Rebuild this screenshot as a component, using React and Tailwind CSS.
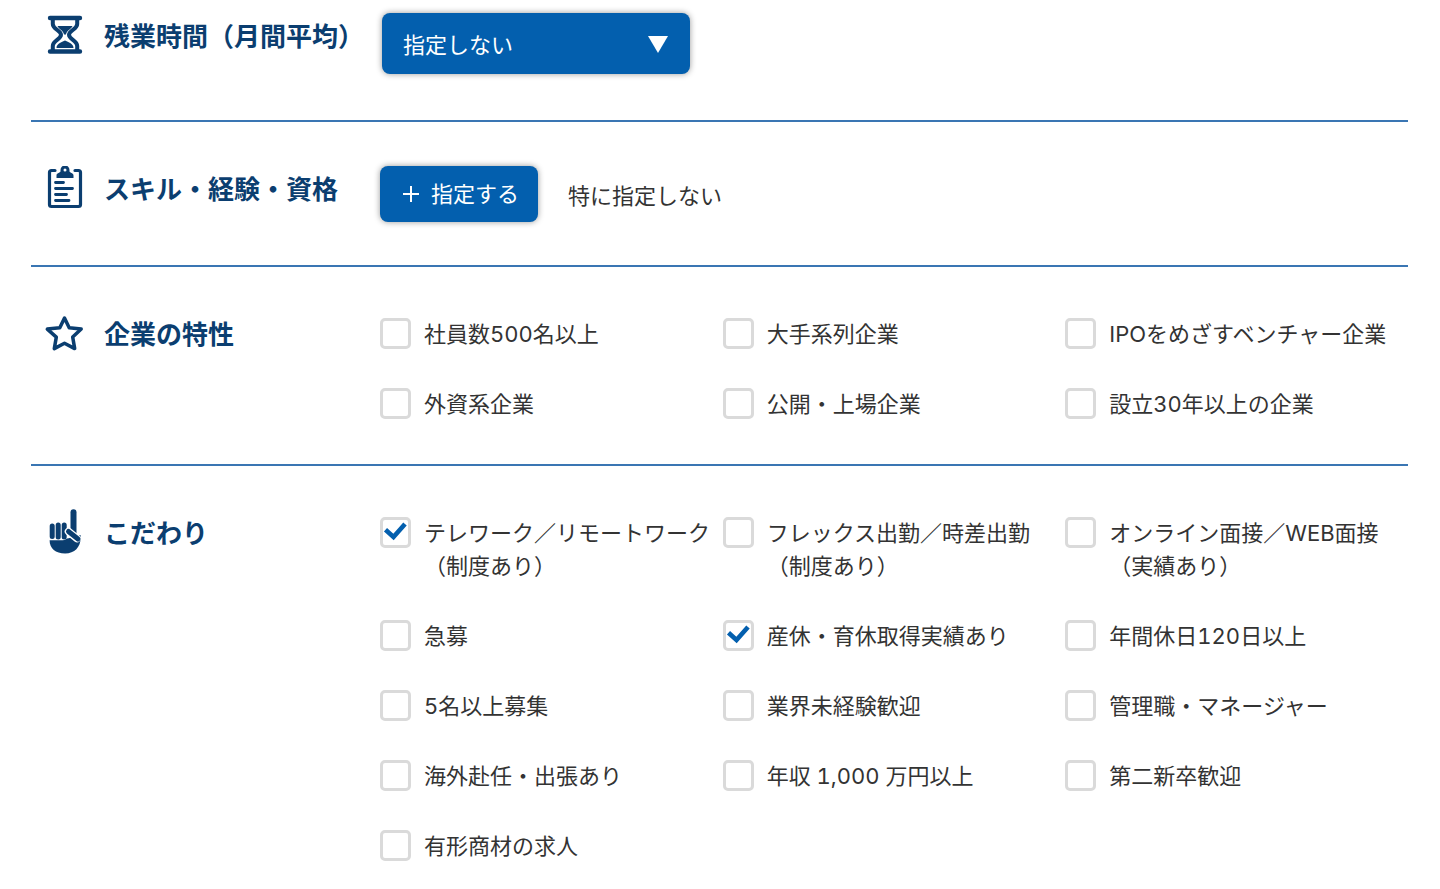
import React, { useState } from 'react';

const FEATURES = [
    '社員数500名以上',
    '大手系列企業',
    'IPOをめざすベンチャー企業',
    '外資系企業',
    '公開・上場企業',
    '設立30年以上の企業',
];

const PREFERENCES = [
    'テレワーク／リモートワーク\n（制度あり）',
    'フレックス出勤／時差出勤\n（制度あり）',
    'オンライン面接／WEB面接\n（実績あり）',
    '急募',
    '産休・育休取得実績あり',
    '年間休日120日以上',
    '5名以上募集',
    '業界未経験歓迎',
    '管理職・マネージャー',
    '海外赴任・出張あり',
    '年収 1,000 万円以上',
    '第二新卒歓迎',
    '有形商材の求人',
];

function HourglassIcon() {
    return (
        <svg className="w-9 h-11" viewBox="0 0 36 44" fill="none" stroke="currentColor">
            <path d="M3 5h30M3 38.500h30" strokeWidth="4.400" strokeLinecap="round" />
            <path d="M5.800 6v5c0 5.500 8.200 6 8.200 10.800S5.800 27.500 5.800 33v5M30.200 6v5c0 5.500-8.200 6-8.200 10.800s8.200 5.700 8.200 11.200v5" strokeWidth="4" />
            <path d="M10.500 13h15c-1.500 3.500-6 4.500-6.500 8.500h-2c-.5-4-5-5-6.500-8.500z" fill="currentColor" stroke="none" />
            <path d="M9.500 35c0-4 4-5.500 8.500-7.500 4.500 2 8.500 3.500 8.500 7.500z" fill="currentColor" stroke="none" />
        </svg>
    );
}

function ClipboardIcon() {
    return (
        <svg className="w-9 h-11" viewBox="0 0 36 44" fill="none" stroke="currentColor">
            <path d="M8 4.500H4.500a2 2 0 0 0-2 2V38.500a2 2 0 0 0 2 2h27a2 2 0 0 0 2-2V6.500a2 2 0 0 0-2-2H28" strokeWidth="3.200" strokeLinecap="round" />
            <path
                d="M9.500 12V9.500c0-2.500 2.500-2 4-4V4a4.500 4.500 0 0 1 9 0v1.500c1.500 2 4 1.500 4 4V12zM18 2.600a1.500 1.500 0 1 0 0 3 1.500 1.500 0 0 0 0-3z"
                fill="currentColor"
                fillRule="evenodd"
                stroke="none"
            />
            <path d="M8.500 16.500h8M8.500 22.500h17M8.500 28.500h11M8.500 34.500h13.500" strokeWidth="2.800" strokeLinecap="round" />
        </svg>
    );
}

function StarIcon() {
    return (
        <svg className="w-9 h-11 overflow-visible" viewBox="0 0 36 44" fill="none" stroke="currentColor">
            <path
                d="M17.500 7l4.700 9.700 12 1.400-8.500 8 2 11.500-10.200-5.400L7.300 37.600l2-11.500-9-8 12.500-1.400z"
                strokeWidth="3.500"
                strokeLinejoin="round"
            />
        </svg>
    );
}

function HandIcon() {
    return (
        <svg className="w-9 h-11 overflow-visible" viewBox="0 0 36 44" fill="none" stroke="currentColor" strokeLinecap="round">
            <path d="M5.200 16V26.500M11.200 15v12M17.200 15v12" strokeWidth="5" />
            <path d="M26.500 2.200V23" strokeWidth="6" />
            <path d="M2.600 30.300h13c3 0 3.500-2 6-2l12-3.300v3c0 9-6 15.500-15.500 15.500S2.600 38.500 2.600 30.300z" fill="currentColor" stroke="none" />
            <path d="M21.500 21.500l8.500 7" stroke="white" strokeWidth="7.600" />
            <path d="M21.500 21.500l9.500 7.500" strokeWidth="5" />
        </svg>
    );
}

function Section({ icon, title, className, children }) {
    return (
        <section className={className}>
            <div className="flex items-start">
                <div className="flex h-11 w-[349px] shrink-0 items-center gap-[21px] pl-4 text-[#0b3e70]">
                    {icon}
                    <h2 className="whitespace-nowrap pt-[3px] text-[26px] font-bold leading-[38px]">{title}</h2>
                </div>
                <div className="min-w-0 flex-1">{children}</div>
            </div>
        </section>
    );
}

function CheckboxGrid({ items, initial = [] }) {
    const [checked, setChecked] = useState(initial);

    const toggle = (item) => {
        setChecked((prev) => (prev.includes(item) ? prev.filter((i) => i !== item) : [...prev, item]));
    };

    return (
        <div className="grid grid-cols-3 gap-y-[37px] pt-[7px]">
            {items.map((item) => (
                <label key={item} className="flex cursor-pointer items-start gap-[13px]">
                    <span className="relative h-[31px] w-[31px] shrink-0">
                        <input
                            type="checkbox"
                            checked={checked.includes(item)}
                            onChange={() => toggle(item)}
                            className="peer block h-full w-full cursor-pointer appearance-none rounded-[5px] border-3 border-[#dadada] bg-white"
                        />
                        <svg
                            className="pointer-events-none absolute inset-0 hidden h-full w-full text-[#035fae] peer-checked:block"
                            viewBox="0 0 31 31"
                            fill="none"
                            stroke="currentColor"
                            strokeWidth="4.600"
                        >
                            <path d="M5.500 12.800l8 7.200L25 7" />
                        </svg>
                    </span>
                    <span className="whitespace-pre-line">{item}</span>
                </label>
            ))}
        </div>
    );
}

export default function App() {
    return (
        <main className="min-h-screen bg-white pl-[31px] pr-8 font-['Inter','Noto_Sans_CJK_JP',sans-serif] text-[22px] leading-[33px] tabular-nums text-[#333]">
            <Section icon={<HourglassIcon />} title="残業時間（月間平均）" className="border-b-2 border-[#3a76b3] pt-[13px] pb-[46px]">
                <div className="relative ml-0.5 w-[308px]">
                    <select
                        aria-label="残業時間（月間平均）"
                        className="block h-[61px] w-full cursor-pointer appearance-none rounded-lg bg-[#035fae] pt-[3px] pl-[21px] pr-14 text-white shadow-[0_0_6px_rgba(0,0,0,0.4)]"
                    >
                        <option>指定しない</option>
                    </select>
                    <svg className="pointer-events-none absolute right-[22px] top-[23px] h-[17px] w-5 text-white" viewBox="0 0 20 17" fill="currentColor">
                        <path d="M0 0h20L10 17z" />
                    </svg>
                </div>
            </Section>

            <Section icon={<ClipboardIcon />} title="スキル・経験・資格" className="border-b-2 border-[#3a76b3] pt-11 pb-[43px]">
                <div className="flex items-center gap-[30px]">
                    <button
                        type="button"
                        className="flex h-14 w-[158px] cursor-pointer items-center gap-3 rounded-lg bg-[#035fae] pl-[23px] text-white shadow-[0_0_6px_rgba(0,0,0,0.4)]"
                    >
                        <svg className="h-4 w-4" viewBox="0 0 16 16" fill="none" stroke="currentColor" strokeWidth="2">
                            <path d="M8 0v16M0 8h16" />
                        </svg>
                        指定する
                    </button>
                    <p className="pt-[5px]">特に指定しない</p>
                </div>
            </Section>

            <Section icon={<StarIcon />} title="企業の特性" className="border-b-2 border-[#3a76b3] pt-11 pb-[43px]">
                <CheckboxGrid items={FEATURES} />
            </Section>

            <Section icon={<HandIcon />} title="こだわり" className="pt-11">
                <CheckboxGrid items={PREFERENCES} initial={[PREFERENCES[0], PREFERENCES[4]]} />
            </Section>
        </main>
    );
}
